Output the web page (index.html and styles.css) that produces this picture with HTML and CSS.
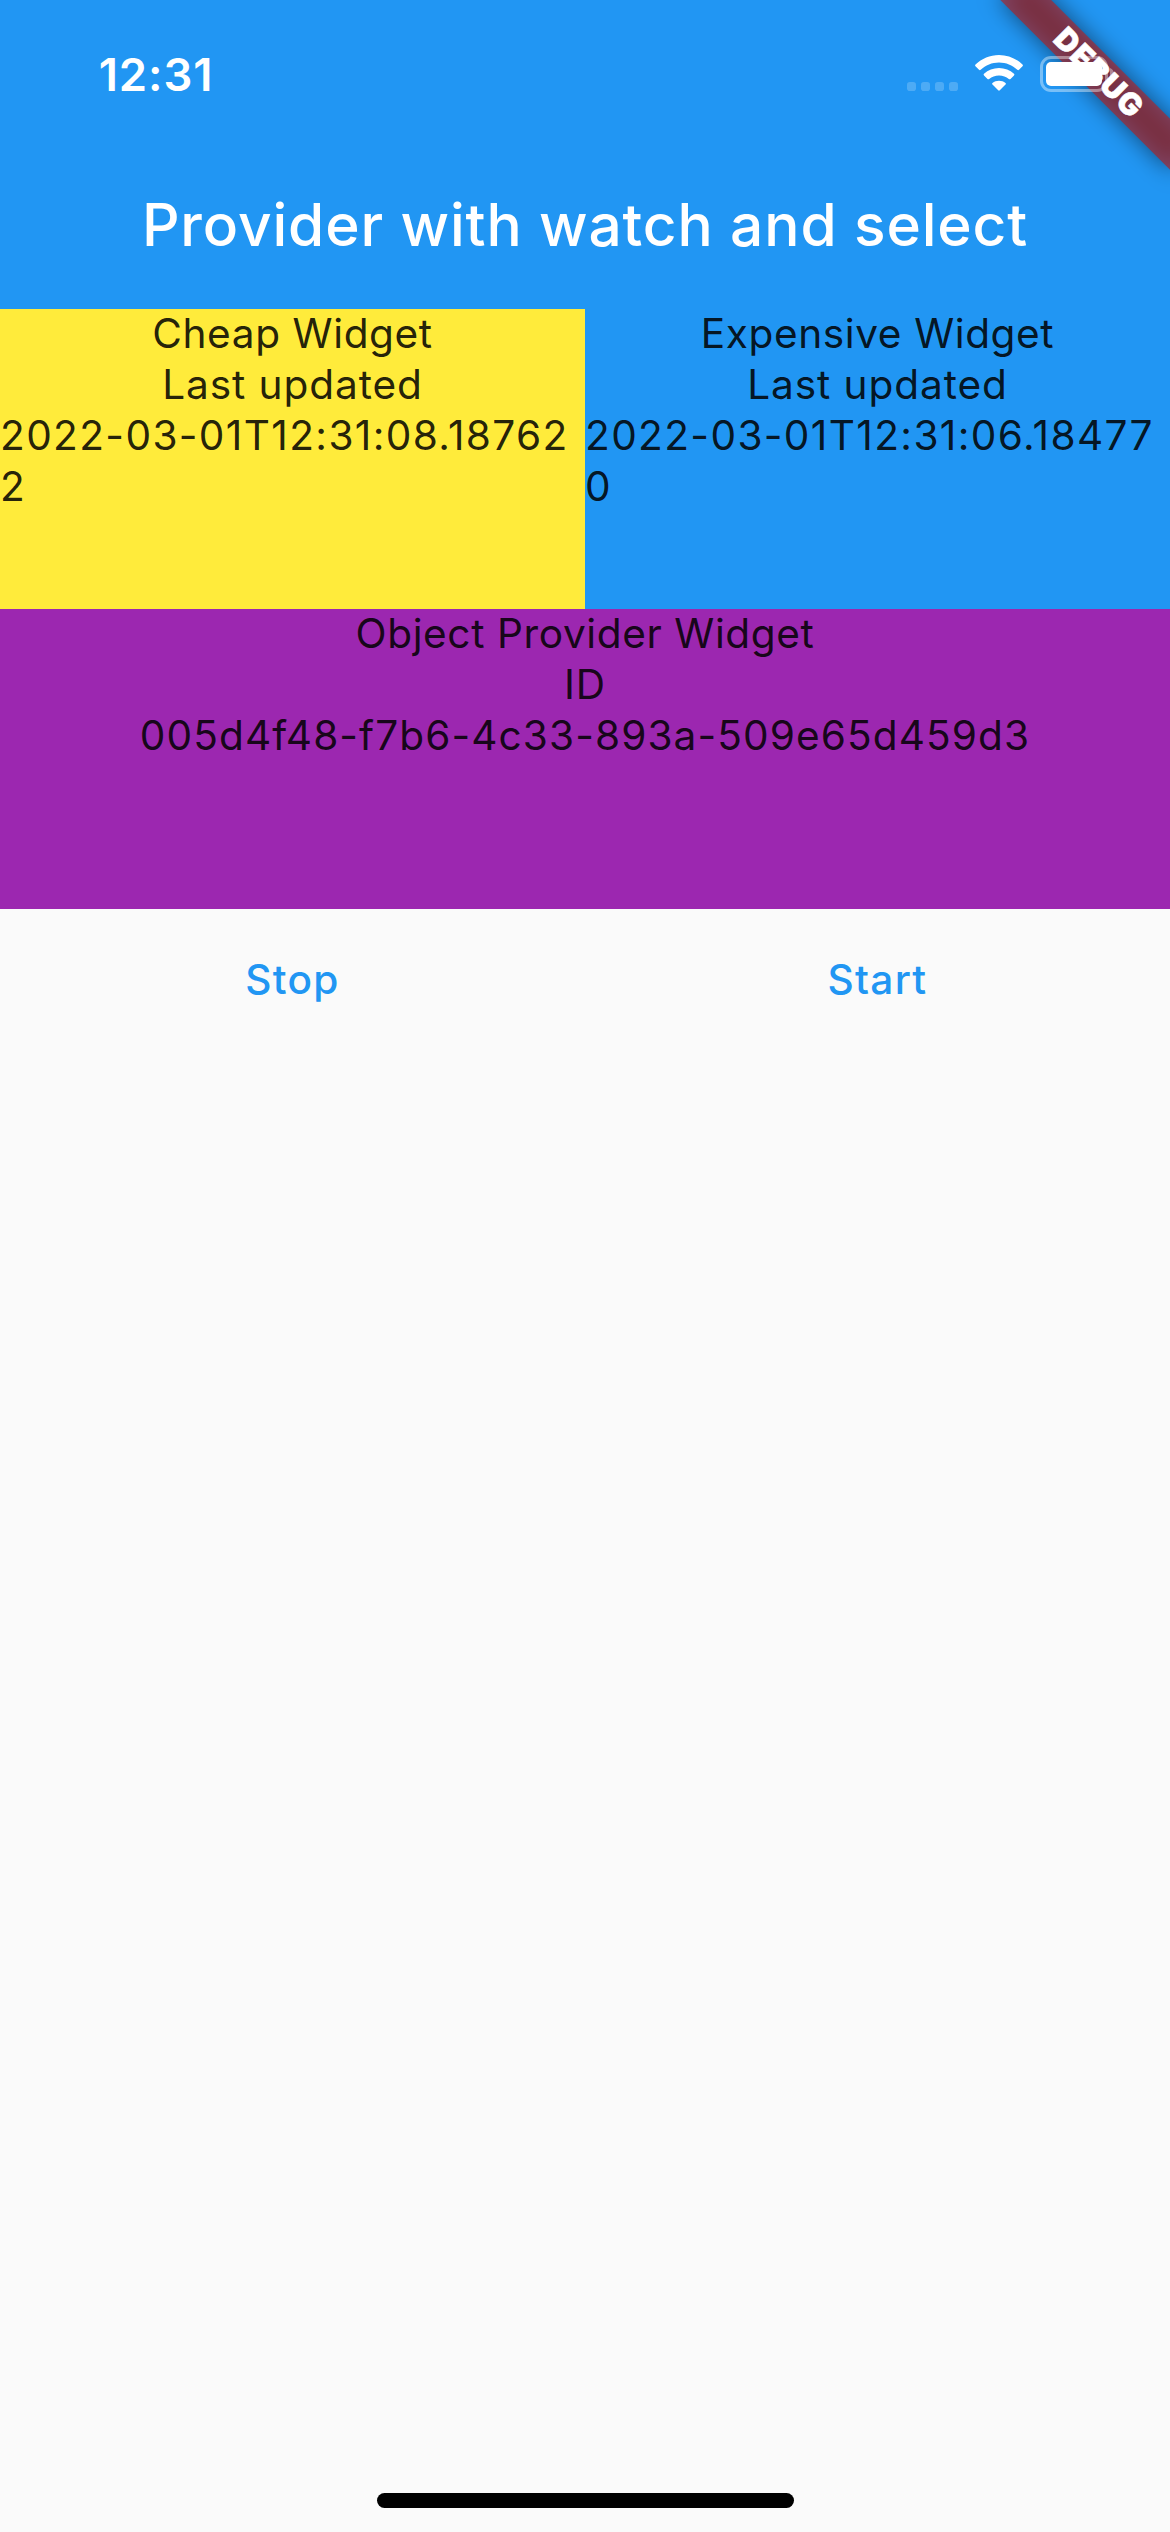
FILE: index.html
```html
<!DOCTYPE html>
<html lang="en">
<head>
<meta charset="utf-8">
<title>Provider with watch and select</title>
<link rel="stylesheet" href="styles.css">
</head>
<body>
<div class="screen">
  <header class="app-header">
    <div class="status-bar">
      <time class="clock">12:31</time>
      <div class="status-icons">
        <svg class="cellular" width="51" height="9" viewBox="0 0 51 9" fill="#fff" fill-opacity=".2">
          <rect width="9" height="9" rx="2.8"/><rect x="14" width="9" height="9" rx="2.8"/><rect x="28" width="9" height="9" rx="2.8"/><rect x="42" width="9" height="9" rx="2.8"/>
        </svg>
        <svg class="wifi" width="48" height="36" viewBox="0 0 48 36" fill="#fff">
          <path d="M24 0C15 0 6.700 3.600.5 9.500Q-.3 10.400.5 11.200L4 14.800Q4.800 15.600 5.700 14.800C10.500 10.300 17 7.500 24 7.500S37.500 10.300 42.300 14.800Q43.200 15.600 44 14.800L47.500 11.200Q48.300 10.400 47.500 9.500C41.300 3.600 33 0 24 0Z"/>
          <path d="M24 13C18.300 13 13 15.200 9 18.700Q8.100 19.500 9 20.400L12.500 24Q13.300 24.700 14.200 24C16.800 21.800 20.200 20.400 24 20.400S31.200 21.800 33.800 24Q34.700 24.700 35.500 24L39 20.400Q39.900 19.500 39 18.700C35 15.200 29.700 13 24 13Z"/>
          <path d="M24 25.700C21.500 25.700 19.300 26.500 17.500 27.900Q16.600 28.700 17.500 29.600L23.200 35.300Q24 36.100 24.800 35.300L30.500 29.600Q31.400 28.700 30.500 27.900C28.700 26.500 26.500 25.700 24 25.700Z"/>
        </svg>
        <svg class="battery" width="74" height="36" viewBox="0 0 74 36">
          <rect x="1.500" y="1.500" width="65" height="33" rx="9.500" fill="none" stroke="#fff" stroke-width="3" stroke-opacity=".4"/>
          <rect x="6" y="6" width="56" height="24" rx="5" fill="#fff"/>
          <path d="M70 12C72.500 13 74 15.300 74 18S72.500 23 70 24Z" fill="#fff" fill-opacity=".4"/>
        </svg>
      </div>
    </div>
    <h1 class="title">Provider with watch and select</h1>
  </header>
  <main>
    <div class="widget-row">
      <section class="widget cheap">
        <p class="name">Cheap Widget</p>
        <p class="label">Last updated</p>
        <p class="stamp">2022-03-01T12:31:08.187622</p>
      </section>
      <section class="widget expensive">
        <p class="name">Expensive Widget</p>
        <p class="label">Last updated</p>
        <p class="stamp">2022-03-01T12:31:06.184770</p>
      </section>
    </div>
    <section class="widget object">
      <p class="name">Object Provider Widget</p>
      <p class="label">ID</p>
      <p class="uuid">005d4f48-f7b6-4c33-893a-509e65d459d3</p>
    </section>
    <div class="actions">
      <button class="action" type="button">Stop</button>
      <button class="action" type="button">Start</button>
    </div>
  </main>
  <footer class="home-area"><div class="home-indicator"></div></footer>
  <svg class="debug-banner" width="240" height="240" viewBox="0 0 240 240">
    <defs><filter id="shade" x="-30%" y="-150%" width="160%" height="400%"><feGaussianBlur stdDeviation="11.900"/></filter></defs>
    <g transform="translate(240 0) rotate(45)">
      <rect x="-120" y="84" width="240" height="36" fill="#000" fill-opacity=".5" filter="url(#shade)"/>
      <rect x="-120" y="84" width="240" height="36" fill="#b71c1c" fill-opacity=".627"/>
      <text class="debug-text" x="1.500" y="112.500" text-anchor="middle">DEBUG</text>
    </g>
  </svg>
</div>
</body>
</html>
```
FILE: styles.css
```css
* {
  box-sizing: border-box;
}

body {
  margin: 0;
  font-family: Inter, "Liberation Sans", sans-serif;
  background: #fafafa;
}

.screen {
  position: relative;
  display: flex;
  flex-direction: column;
  width: 1170px;
  height: 2532px;
  overflow: hidden;
}

.app-header {
  height: 309px;
  background: #2196f3;
  color: #fff;
}

.status-bar {
  position: relative;
  z-index: 2;
  display: flex;
  justify-content: space-between;
  height: 141px;
  padding: 47px 56px 0 98.7px;
}

.clock {
  font-size: 45.4px;
  font-weight: 600;
  line-height: 55px;
  letter-spacing: 0.94px;
}

.status-icons {
  display: flex;
  align-items: flex-end;
  height: 45px;
}

.cellular {
  margin: 0 17px 1px 0;
}

.wifi {
  margin: 0 17px 1px 0;
}

.title {
  margin: 0;
  font-size: 58.6px;
  font-weight: 500;
  line-height: 168px;
  letter-spacing: 0.87px;
  text-align: center;
}

.widget-row {
  display: grid;
  grid-template-columns: 1fr 1fr;
}

.widget {
  display: flow-root;
  height: 300px;
  color: rgba(0, 0, 0, 0.87);
  font-size: 40.6px;
  line-height: 51px;
  text-align: center;
}

.widget p {
  margin: 0;
}

.widget .name {
  margin-top: -1px;
  letter-spacing: 0.6px;
}

.widget .label {
  letter-spacing: 0.92px;
}

.widget .stamp {
  letter-spacing: 1.38px;
  text-align: left;
  word-break: break-all;
}

.widget .uuid {
  letter-spacing: 1.1px;
}

.cheap {
  background: #ffeb3b;
}

.expensive {
  background: #2196f3;
}

.object {
  background: #9c27b0;
}

.actions {
  display: grid;
  grid-template-columns: 1fr 1fr;
  height: 144px;
}

.action {
  padding: 0 0 3px;
  border: 0;
  background: none;
  color: #2196f3;
  font: 500 40.6px Inter, "Liberation Sans", sans-serif;
  letter-spacing: 1.3px;
}

.home-area {
  display: flex;
  justify-content: center;
  margin-top: auto;
  padding-bottom: 24px;
}

.home-indicator {
  width: 417px;
  height: 15px;
  border-radius: 8px;
  background: #000;
}

.debug-banner {
  position: absolute;
  top: 0;
  right: 0;
  z-index: 1;
}

.debug-text {
  fill: #fff;
  stroke: #fff;
  stroke-width: 0.6px;
  font-size: 30.6px;
  font-weight: 900;
  letter-spacing: 1.2px;
}
```
